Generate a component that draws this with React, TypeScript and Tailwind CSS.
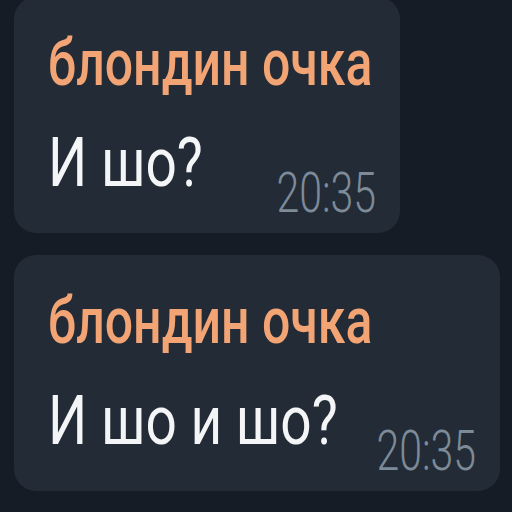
export default function App() {
  const messages = [
    { text: "И шо?", width: "w-[386px]" },
    { text: "И шо и шо?", width: "w-[486px]" },
  ];

  return (
    <div
      className="w-[512px] h-[512px] overflow-hidden bg-[#151c25] pl-[14px] flex flex-col gap-[22px]"
      style={{ fontFamily: "Roboto, 'Noto Sans', sans-serif" }}
    >
      {messages.map((m, idx) => (
        <div
          key={idx}
          className={`${m.width} ${idx === 0 ? "-mt-[3px]" : ""} shrink-0 rounded-[22px] bg-[#222b36] pl-[34px] pr-[24px] pt-[41px] pb-[18px]`}
        >
          <div className="h-[50px] leading-[50px] text-[50px] font-medium text-[#f2a474] whitespace-nowrap">
            <span className="inline-block scale-y-[1.3]">блондин очка</span>
          </div>
          <div className="mt-[44px] flex items-start justify-between">
            <div className="h-[60px] leading-[60px] text-[55px] text-[#f3f5f7] whitespace-nowrap">
              <span className="inline-block scale-y-[1.25]">{m.text}</span>
            </div>
            <div className="mt-[39px] h-[44px] leading-[44px] text-[41px] font-light text-[#7d8a98] whitespace-nowrap">
              <span className="inline-block scale-y-[1.34]">20:35</span>
            </div>
          </div>
        </div>
      ))}
    </div>
  );
}
